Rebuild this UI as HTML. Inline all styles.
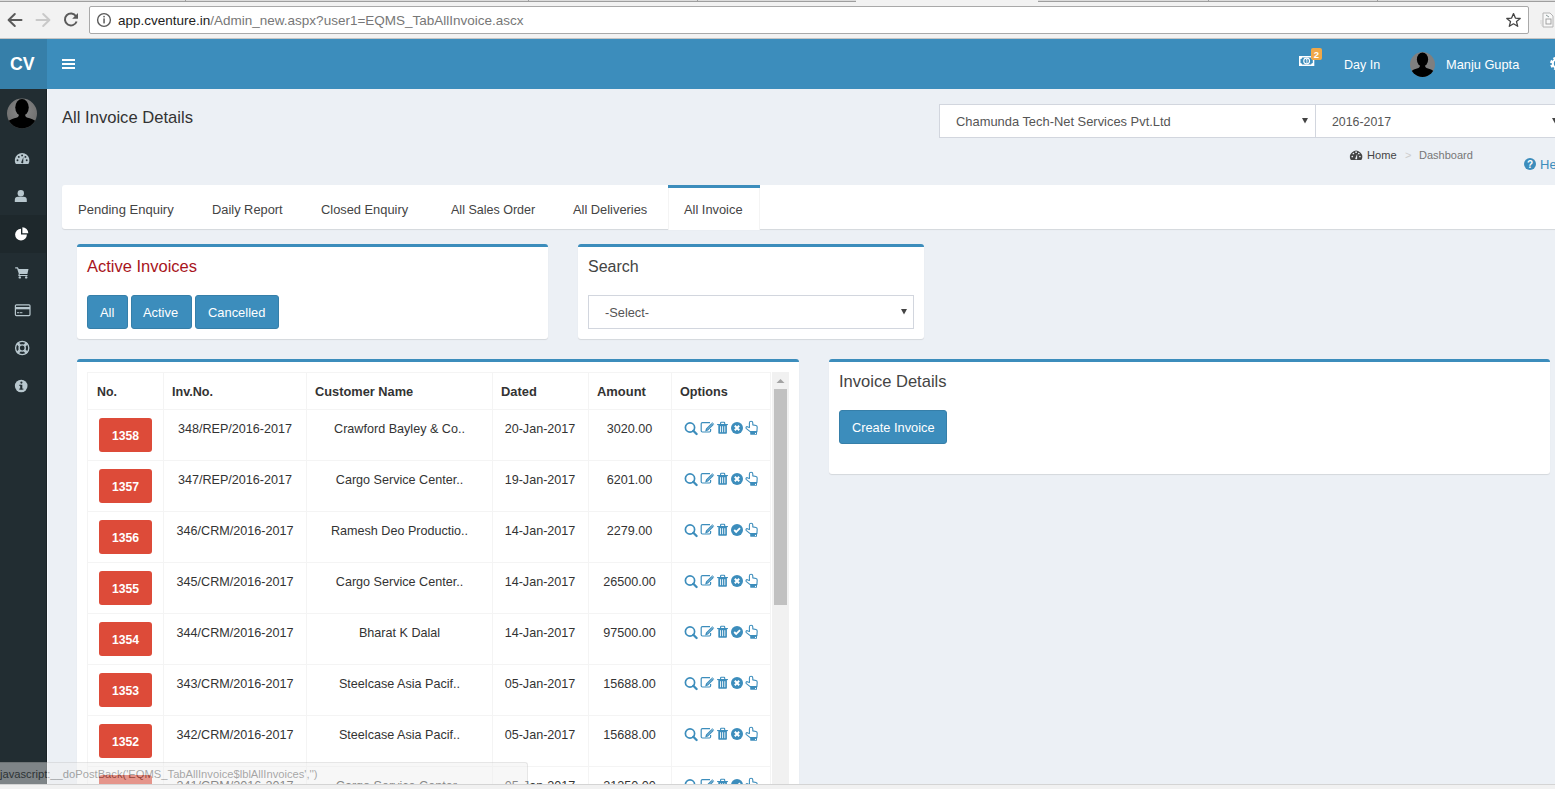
<!DOCTYPE html>
<html><head><meta charset="utf-8">
<style>
*{box-sizing:border-box;margin:0;padding:0}
html,body{width:1555px;height:789px;overflow:hidden;background:#ecf0f5;font-family:"Liberation Sans",sans-serif;color:#333}
.a{position:absolute}
.t{position:absolute;white-space:nowrap;line-height:1}
.tc{position:absolute;white-space:nowrap;line-height:1;text-align:center;font-size:12.6px;color:#333}
.b{font-weight:bold;color:#fff;font-size:12.2px}
svg{position:absolute;overflow:visible}
#chrome{left:0;top:0;width:1555px;height:39px;background:#f2f2f2}
#tabstrip{left:0;top:0;width:1555px;height:2px;background:#dcdcdc;border-bottom:1px solid #9e9e9e}
#omni{left:89px;top:6px;width:1440px;height:28px;background:#fff;border:1px solid #a9a9a9;border-radius:2px}
#chline{left:0;top:38px;width:1555px;height:1px;background:#c4c4c4}
#logo{left:0;top:39px;width:47px;height:50px;background:#367fa9}
#nav{left:47px;top:39px;width:1508px;height:50px;background:#3c8dbc}
#side{left:0;top:89px;width:47px;height:700px;background:#222d32}
#sideact{left:0;top:215px;width:47px;height:38px;background:#1e282c}
.box{position:absolute;background:#fff;border-top:3px solid #3c8dbc;border-radius:3px;box-shadow:0 1px 1px rgba(0,0,0,0.1)}
.btn{position:absolute;background:#3c8dbc;border:1px solid #367fa9;border-radius:3px}
.sel{position:absolute;background:#fff;border:1px solid #d2d6de}
.badge{position:absolute;left:99px;width:53px;height:34px;background:#dd4b39;border-radius:3px}
.hl{position:absolute;left:87px;width:684px;height:1px;background:#f4f4f4}
.vl{position:absolute;top:372px;width:1px;height:420px;background:#f4f4f4}
</style></head><body>
<svg width="0" height="0" style="position:absolute">
<defs>
 <g id="ops" fill="#3c8dbc" stroke="none">
  <!-- search -->
  <circle cx="6" cy="5.5" r="4.6" fill="none" stroke="#3c8dbc" stroke-width="1.7"/>
  <line x1="9.3" y1="8.7" x2="12.6" y2="12" stroke="#3c8dbc" stroke-width="2.3" stroke-linecap="round"/>
  <!-- edit -->
  <path d="M26 0.6 H18.4 Q17.2 0.6 17.2 1.8 V8.8 Q17.2 10 18.4 10 H25.4 Q26.6 10 26.6 8.8 V7" fill="none" stroke="#3c8dbc" stroke-width="1.2"/>
  <path d="M22 6.5 L28.3 0.2 L30.3 2.2 L24 8.5 Z M22 6.5 L24 8.5 L21.1 9.4 Z"/>
  <path d="M23.2 7.3 L28 2.5" stroke="#fff" stroke-width="0.55" opacity="0.8"/>
  <path d="M27.6 0.9 L29.6 2.9" stroke="#fff" stroke-width="0.6"/>
  <!-- trash -->
  <rect x="33.1" y="2" width="10.8" height="1.1"/>
  <path d="M36.6 2.2 V1 Q36.6 0.3 37.3 0.3 H40 Q40.7 0.3 40.7 1 V2.2" fill="none" stroke="#3c8dbc" stroke-width="1.1"/>
  <path d="M34.3 3 H42.9 V11 Q42.9 11.7 42.2 11.7 H35 Q34.3 11.7 34.3 11 Z"/>
  <rect x="36" y="4.2" width="0.85" height="6" fill="#fff"/>
  <rect x="38.2" y="4.2" width="0.85" height="6" fill="#fff"/>
  <rect x="40.4" y="4.2" width="0.85" height="6" fill="#fff"/>
  <!-- hand -->
  <path d="M66.2 9.6 L62.4 6.6 Q61.5 5.8 62.2 5 Q62.9 4.3 63.8 4.9 L65.4 5.6 V0.9 Q65.4 -0.8 67.1 -0.8 Q68.8 -0.8 68.8 0.9 V2.9 L72 3.5 Q73.3 3.8 73.2 5.2 L72.9 9.6 Z" fill="#fff" stroke="#3c8dbc" stroke-width="1.1" stroke-linejoin="round"/>
  <rect x="66.2" y="9.6" width="6.8" height="3.1" rx="0.4"/>
  <circle cx="71.5" cy="11.4" r="0.55" fill="#fff"/>
 </g>
 <g id="ic-x">
  <circle cx="53" cy="6" r="6" fill="#3c8dbc"/>
  <path d="M50.8 3.8 L55.2 8.2 M55.2 3.8 L50.8 8.2" stroke="#fff" stroke-width="2"/>
 </g>
 <g id="ic-c">
  <circle cx="53" cy="6" r="6" fill="#3c8dbc"/>
  <path d="M50.2 6 L52.2 8 L56 4.2" fill="none" stroke="#fff" stroke-width="1.8"/>
 </g>
</defs>
</svg>

<!-- Browser chrome -->
<div id="chrome" class="a"></div>
<div id="tabstrip" class="a"></div>
<div class="a" style="left:856px;top:0;width:182px;height:3px;background:#f2f2f2"></div>
<div class="a" style="left:185px;top:0;width:1px;height:2px;background:#9e9e9e"></div>
<div class="a" style="left:528px;top:0;width:1px;height:2px;background:#9e9e9e"></div>
<div class="a" style="left:697px;top:0;width:1px;height:2px;background:#9e9e9e"></div>
<div class="a" style="left:1208px;top:0;width:1px;height:2px;background:#9e9e9e"></div>
<div class="a" style="left:1377px;top:0;width:1px;height:2px;background:#9e9e9e"></div>
<div id="omni" class="a"></div>
<div id="chline" class="a"></div>
<svg style="left:0;top:0" width="130" height="38">
 <path d="M21.5 20 H9 M14.8 14 L8.6 20 L14.8 26" fill="none" stroke="#5a5a5a" stroke-width="2" stroke-linecap="round" stroke-linejoin="round"/>
 <path d="M36.5 20 H49 M43.2 14 L49.4 20 L43.2 26" fill="none" stroke="#c9c9c9" stroke-width="2" stroke-linecap="round" stroke-linejoin="round"/>
 <path d="M76.6 21.5 A6 6 0 1 1 76 16.2" fill="none" stroke="#5a5a5a" stroke-width="2"/>
 <path d="M78 13 V18.8 H72.2 Z" fill="#5a5a5a"/>
 <circle cx="104" cy="20" r="6.4" fill="none" stroke="#5a5a5a" stroke-width="1.4"/>
 <rect x="103.3" y="18.4" width="1.5" height="5" fill="#5a5a5a"/>
 <rect x="103.3" y="15.9" width="1.5" height="1.5" fill="#5a5a5a"/>
</svg>
<svg style="left:1500px;top:0" width="55" height="38">
 <path d="M13.5 13.6 L15.4 18.1 L20.2 18.5 L16.5 21.6 L17.7 26.3 L13.5 23.8 L9.3 26.3 L10.5 21.6 L6.8 18.5 L11.6 18.1 Z" fill="none" stroke="#444" stroke-width="1.3" stroke-linejoin="round"/>
 <path d="M43 13 H50 L53 16 V27 H43 Z" fill="#f8f8f8" stroke="#b4b4b4" stroke-width="1"/>
 <rect x="46" y="19" width="5" height="5" fill="none" stroke="#9a9a9a" stroke-width="0.9"/>
 <path d="M46 15 L49 17" stroke="#8a9a9a" stroke-width="1"/>
 <path d="M40 21 H43 M40 23 H43 M41 25 H43" stroke="#c8c8c8" stroke-width="0.7"/>
</svg>
<div class="t" style="left:118px;top:14px;font-size:13.5px;color:#222">app.cventure.in<span style="color:#777">/Admin_new.aspx?user1=EQMS_TabAllInvoice.ascx</span></div>

<!-- Header -->
<div id="logo" class="a"></div>
<div id="nav" class="a"></div>
<div class="t" style="left:10px;top:56px;font-size:17.7px;font-weight:bold;color:#fff">CV</div>
<div class="a" style="left:62px;top:59px;width:13px;height:2px;background:#fff"></div>
<div class="a" style="left:62px;top:63px;width:13px;height:2px;background:#fff"></div>
<div class="a" style="left:62px;top:67px;width:13px;height:2px;background:#fff"></div>
<svg style="left:1290px;top:40px" width="40" height="40">
 <rect x="9" y="16" width="15.3" height="10" fill="#fff"/>
 <path d="M12.2 17.4 H21.1 Q21.1 18.9 22.8 18.9 V23.1 Q21.1 23.1 21.1 24.6 H12.2 Q12.2 23.1 10.5 23.1 V18.9 Q12.2 18.9 12.2 17.4 Z" fill="#3c8dbc"/>
 <circle cx="16.65" cy="21" r="2.9" fill="none" stroke="#fff" stroke-width="1.1"/>
 <path d="M15.9 19.9 L16.9 19.2 V22.9" fill="none" stroke="#fff" stroke-width="0.9"/>
 <rect x="21" y="8" width="11" height="12" rx="2" fill="#f0a848"/>
 <text x="26.5" y="17.6" font-family="Liberation Sans" font-size="9.5" font-weight="bold" fill="#fff" text-anchor="middle">2</text>
</svg>
<div class="t" style="left:1344px;top:59px;font-size:12.5px;color:#fff">Day In</div>
<svg style="left:1410px;top:52px" width="26" height="26">
 <defs><clipPath id="av2"><circle cx="12.5" cy="12.5" r="12.5"/></clipPath></defs>
 <circle cx="12.5" cy="12.5" r="12.5" fill="#7f7f7f"/>
 <g clip-path="url(#av2)"><g fill="#000" transform="translate(12.5,12.5) scale(12.5)">
  <ellipse cx="0" cy="-0.4" rx="0.45" ry="0.56"/>
  <path d="M-1.1 1.1 V0.7 Q-0.8 0.34 -0.32 0.27 Q-0.2 0.2 -0.2 0.05 H0.2 Q0.2 0.2 0.32 0.27 Q0.8 0.34 1.1 0.7 V1.1 Z"/>
 </g></g>
</svg>
<div class="t" style="left:1446px;top:59px;font-size:12.8px;color:#fff">Manju Gupta</div>
<svg style="left:1542px;top:50px" width="20" height="30">
 <circle cx="15" cy="13.5" r="5.2" fill="none" stroke="#fff" stroke-width="3.4" stroke-dasharray="2.4 1.7"/>
 <circle cx="15" cy="13.5" r="4.2" fill="none" stroke="#fff" stroke-width="2"/>
</svg>

<!-- Sidebar -->
<div id="side" class="a"></div>
<div id="sideact" class="a"></div>
<div class="a" style="left:46px;top:89px;width:1px;height:700px;background:#1a2327"></div>
<div class="a" style="left:47px;top:89px;width:1px;height:700px;background:#f6f9fd"></div>
<svg style="left:0;top:89px" width="47" height="320">
 <defs><clipPath id="av1"><circle cx="22" cy="24.5" r="15"/></clipPath>
  <radialGradient id="avg" cx="0.5" cy="0.4" r="0.6"><stop offset="0" stop-color="#8a8a8a"/><stop offset="1" stop-color="#6e6e6e"/></radialGradient></defs>
 <circle cx="22" cy="24.5" r="15" fill="url(#avg)"/>
 <g clip-path="url(#av1)"><g fill="#000" transform="translate(22,24.5) scale(15)">
  <ellipse cx="0" cy="-0.4" rx="0.45" ry="0.56"/>
  <path d="M-1.1 1.1 V0.7 Q-0.8 0.34 -0.32 0.27 Q-0.2 0.2 -0.2 0.05 H0.2 Q0.2 0.2 0.32 0.27 Q0.8 0.34 1.1 0.7 V1.1 Z"/>
 </g></g>
 <!-- dashboard -->
 <g transform="translate(14.8,64)">
  <path d="M1.05 11 A7.3 7.3 0 1 1 13.55 11 Z" fill="#b8c7ce"/>
  <circle cx="2.7" cy="7.2" r="0.95" fill="#222d32"/><circle cx="4" cy="3.9" r="0.95" fill="#222d32"/><circle cx="7.3" cy="2.4" r="0.95" fill="#222d32"/><circle cx="10.6" cy="3.9" r="0.95" fill="#222d32"/><circle cx="11.9" cy="7.2" r="0.95" fill="#222d32"/>
  <path d="M6.3 9.6 L8.6 4 L8.4 9.9 Q7.4 10.8 6.3 9.6 Z" fill="#222d32"/>
 </g>
 <!-- user -->
 <g transform="translate(14.8,101)" fill="#b8c7ce">
  <circle cx="6" cy="3.2" r="3.2"/>
  <path d="M0 12 V10 Q0 6.8 3.2 6.8 H8.8 Q12 6.8 12 10 V12 Z"/>
 </g>
 <!-- pie -->
 <g transform="translate(14.8,137.7)">
  <path d="M6.2 2 A5.9 5.9 0 1 0 12.1 7.9 H6.2 Z" fill="#fff"/>
  <path d="M7.6 0.6 A5.9 5.9 0 0 1 13.5 6.5 H7.6 Z" fill="#fff"/>
 </g>
 <!-- cart -->
 <g transform="translate(15.2,177.7)" fill="#b8c7ce">
  <path d="M0 0.6 H2.6 L3.6 2.2 H13.3 L12.2 7.4 H4.6 L4.3 8.3 H12.3 V9.4 H3 L3.6 7 L1.9 1.7 H0 Z"/>
  <circle cx="4.6" cy="10.7" r="1.2"/><circle cx="11" cy="10.7" r="1.2"/>
 </g>
 <!-- card -->
 <g transform="translate(14.8,215.2)">
  <rect x="0.6" y="0.6" width="14.6" height="10.8" rx="1" fill="none" stroke="#b8c7ce" stroke-width="1.2"/>
  <rect x="0.6" y="2.8" width="14.6" height="2.3" fill="#b8c7ce"/>
  <rect x="2.2" y="8" width="2.4" height="1" fill="#b8c7ce"/><rect x="5.2" y="8" width="2.4" height="1" fill="#b8c7ce"/>
 </g>
 <!-- life ring -->
 <g transform="translate(22.2,259)" fill="none" stroke="#b8c7ce">
  <circle r="6.6" stroke-width="1.3"/>
  <circle r="3.1" stroke-width="1.4"/>
  <path d="M-2.4 -2.4 L-4.9 -4.9 M2.4 -2.4 L4.9 -4.9 M-2.4 2.4 L-4.9 4.9 M2.4 2.4 L4.9 4.9" stroke-width="2.8"/>
 </g>
 <!-- info -->
 <g transform="translate(21.2,297)">
  <circle r="6.3" fill="#b8c7ce"/>
  <rect x="-1" y="-1.2" width="2.1" height="4.6" fill="#222d32"/>
  <rect x="-2" y="-1.2" width="2" height="1" fill="#222d32"/>
  <rect x="-2" y="2.6" width="4.2" height="1" fill="#222d32"/>
  <circle cx="0.2" cy="-3.4" r="1.1" fill="#222d32"/>
 </g>
</svg>

<!-- Content header -->
<div class="t" style="left:62px;top:110px;font-size:16.6px;color:#333">All Invoice Details</div>
<div class="sel" style="left:939px;top:104px;width:377px;height:34px"></div>
<div class="sel" style="left:1315px;top:104px;width:260px;height:34px"></div>
<div class="t" style="left:956px;top:116px;font-size:12.9px;color:#555">Chamunda Tech-Net Services Pvt.Ltd</div>
<div class="t" style="left:1332px;top:116px;font-size:12.35px;color:#555">2016-2017</div>
<svg style="left:0;top:0" width="1555" height="789">
 <path d="M1302 118 H1308 L1305 123.5 Z" fill="#444"/>
 <path d="M1552 118 H1558 L1555 123.5 Z" fill="#444"/>
 <!-- breadcrumb dashboard icon -->
 <g transform="translate(1350,150)">
  <path d="M0.85 9.9 A6.1 6.1 0 1 1 11.35 9.9 Z" fill="#444"/>
  <circle cx="2.3" cy="6.5" r="0.85" fill="#ecf0f5"/><circle cx="3.4" cy="3.5" r="0.85" fill="#ecf0f5"/><circle cx="6.1" cy="2.2" r="0.85" fill="#ecf0f5"/><circle cx="8.8" cy="3.5" r="0.85" fill="#ecf0f5"/><circle cx="9.9" cy="6.5" r="0.85" fill="#ecf0f5"/>
  <path d="M5.2 8.8 L7.2 3.8 L7.1 9 Q6.2 9.8 5.2 8.8 Z" fill="#ecf0f5"/>
 </g>
 <!-- help -->
 <circle cx="1530" cy="164" r="6" fill="#3c8dbc"/>
 <text x="1530" y="167.6" font-family="Liberation Sans" font-size="10" font-weight="bold" fill="#fff" text-anchor="middle">?</text>
</svg>
<div class="t" style="left:1367px;top:150px;font-size:11.1px;color:#444">Home</div>
<div class="t" style="left:1405px;top:150px;font-size:11px;color:#ccc">&gt;</div>
<div class="t" style="left:1419px;top:150px;font-size:11px;color:#777">Dashboard</div>
<div class="t" style="left:1540px;top:158px;font-size:13px;color:#3c8dbc">Help</div>

<!-- Tabs -->
<div class="a" style="left:62px;top:185px;width:1500px;height:44px;background:#fff;border-radius:3px;box-shadow:0 1px 1px rgba(0,0,0,0.1)"></div>
<div class="a" style="left:668px;top:188px;width:92px;height:42px;background:#fff;border-left:1px solid #f4f4f4;border-right:1px solid #f4f4f4"></div>
<div class="a" style="left:668px;top:185px;width:92px;height:3px;background:#3c8dbc"></div>
<div class="t" style="left:78px;top:203px;font-size:13.05px;color:#444">Pending Enquiry</div>
<div class="t" style="left:212px;top:204px;font-size:12.85px;color:#444">Daily Report</div>
<div class="t" style="left:321px;top:204px;font-size:12.85px;color:#444">Closed Enquiry</div>
<div class="t" style="left:451px;top:204px;font-size:12.52px;color:#444">All Sales Order</div>
<div class="t" style="left:573px;top:204px;font-size:12.85px;color:#444">All Deliveries</div>
<div class="t" style="left:684px;top:204px;font-size:12.85px;color:#444">All Invoice</div>

<!-- Active invoices box -->
<div class="box" style="left:77px;top:244px;width:471px;height:95px"></div>
<div class="t" style="left:87px;top:258px;font-size:16.5px;color:#a8141c">Active Invoices</div>
<div class="btn" style="left:87px;top:295px;width:41px;height:34px"></div>
<div class="btn" style="left:131px;top:295px;width:61px;height:34px"></div>
<div class="btn" style="left:195px;top:295px;width:84px;height:34px"></div>
<div class="t" style="left:100px;top:307px;font-size:12.9px;color:#fff">All</div>
<div class="t" style="left:143px;top:307px;font-size:12.9px;color:#fff">Active</div>
<div class="t" style="left:208px;top:307px;font-size:12.9px;color:#fff">Cancelled</div>

<!-- Search box -->
<div class="box" style="left:578px;top:244px;width:346px;height:95px"></div>
<div class="t" style="left:588px;top:259px;font-size:16px;color:#444">Search</div>
<div class="sel" style="left:588px;top:295px;width:326px;height:34px"></div>
<div class="t" style="left:605px;top:307px;font-size:12.8px;color:#555">-Select-</div>
<svg style="left:0;top:0" width="1" height="1"><path d="M901 309 H907 L904 314.5 Z" fill="#444"/></svg>

<!-- Table box -->
<div class="box" style="left:77px;top:359px;width:722px;height:460px"></div>
<div class="hl" style="top:372px"></div>
<div class="vl" style="left:87px"></div>
<div class="vl" style="left:163px"></div>
<div class="vl" style="left:306px"></div>
<div class="vl" style="left:492px"></div>
<div class="vl" style="left:588px"></div>
<div class="vl" style="left:671px"></div>
<div class="vl" style="left:770px"></div>
<div class="t" style="left:97px;top:386px;font-size:12.4px;font-weight:bold;color:#333">No.</div>
<div class="t" style="left:172px;top:386px;font-size:12.6px;font-weight:bold;color:#333">Inv.No.</div>
<div class="t" style="left:315px;top:386px;font-size:12.8px;font-weight:bold;color:#333">Customer Name</div>
<div class="t" style="left:501px;top:386px;font-size:12.9px;font-weight:bold;color:#333">Dated</div>
<div class="t" style="left:597px;top:386px;font-size:12.95px;font-weight:bold;color:#333">Amount</div>
<div class="t" style="left:680px;top:386px;font-size:12.65px;font-weight:bold;color:#333">Options</div>
<div class="hl" style="top:409px"></div>
<div class="badge" style="top:418px"></div>
<div class="tc b" style="left:99px;width:53px;top:430px">1358</div>
<div class="tc" style="left:163px;width:144px;top:423px">348/REP/2016-2017</div>
<div class="tc" style="left:307px;width:185px;top:423px">Crawford Bayley &amp; Co..</div>
<div class="tc" style="left:492px;width:96px;top:423px">20-Jan-2017</div>
<div class="tc" style="left:588px;width:83px;top:423px">3020.00</div>
<svg style="left:684px;top:422px" width="75" height="15"><use href="#ops"/><use href="#ic-x"/></svg>
<div class="hl" style="top:460px"></div>
<div class="badge" style="top:469px"></div>
<div class="tc b" style="left:99px;width:53px;top:481px">1357</div>
<div class="tc" style="left:163px;width:144px;top:474px">347/REP/2016-2017</div>
<div class="tc" style="left:307px;width:185px;top:474px">Cargo Service Center..</div>
<div class="tc" style="left:492px;width:96px;top:474px">19-Jan-2017</div>
<div class="tc" style="left:588px;width:83px;top:474px">6201.00</div>
<svg style="left:684px;top:473px" width="75" height="15"><use href="#ops"/><use href="#ic-x"/></svg>
<div class="hl" style="top:511px"></div>
<div class="badge" style="top:520px"></div>
<div class="tc b" style="left:99px;width:53px;top:532px">1356</div>
<div class="tc" style="left:163px;width:144px;top:525px">346/CRM/2016-2017</div>
<div class="tc" style="left:307px;width:185px;top:525px">Ramesh Deo Productio..</div>
<div class="tc" style="left:492px;width:96px;top:525px">14-Jan-2017</div>
<div class="tc" style="left:588px;width:83px;top:525px">2279.00</div>
<svg style="left:684px;top:524px" width="75" height="15"><use href="#ops"/><use href="#ic-c"/></svg>
<div class="hl" style="top:562px"></div>
<div class="badge" style="top:571px"></div>
<div class="tc b" style="left:99px;width:53px;top:583px">1355</div>
<div class="tc" style="left:163px;width:144px;top:576px">345/CRM/2016-2017</div>
<div class="tc" style="left:307px;width:185px;top:576px">Cargo Service Center..</div>
<div class="tc" style="left:492px;width:96px;top:576px">14-Jan-2017</div>
<div class="tc" style="left:588px;width:83px;top:576px">26500.00</div>
<svg style="left:684px;top:575px" width="75" height="15"><use href="#ops"/><use href="#ic-x"/></svg>
<div class="hl" style="top:613px"></div>
<div class="badge" style="top:622px"></div>
<div class="tc b" style="left:99px;width:53px;top:634px">1354</div>
<div class="tc" style="left:163px;width:144px;top:627px">344/CRM/2016-2017</div>
<div class="tc" style="left:307px;width:185px;top:627px">Bharat K Dalal</div>
<div class="tc" style="left:492px;width:96px;top:627px">14-Jan-2017</div>
<div class="tc" style="left:588px;width:83px;top:627px">97500.00</div>
<svg style="left:684px;top:626px" width="75" height="15"><use href="#ops"/><use href="#ic-c"/></svg>
<div class="hl" style="top:664px"></div>
<div class="badge" style="top:673px"></div>
<div class="tc b" style="left:99px;width:53px;top:685px">1353</div>
<div class="tc" style="left:163px;width:144px;top:678px">343/CRM/2016-2017</div>
<div class="tc" style="left:307px;width:185px;top:678px">Steelcase Asia Pacif..</div>
<div class="tc" style="left:492px;width:96px;top:678px">05-Jan-2017</div>
<div class="tc" style="left:588px;width:83px;top:678px">15688.00</div>
<svg style="left:684px;top:677px" width="75" height="15"><use href="#ops"/><use href="#ic-x"/></svg>
<div class="hl" style="top:715px"></div>
<div class="badge" style="top:724px"></div>
<div class="tc b" style="left:99px;width:53px;top:736px">1352</div>
<div class="tc" style="left:163px;width:144px;top:729px">342/CRM/2016-2017</div>
<div class="tc" style="left:307px;width:185px;top:729px">Steelcase Asia Pacif..</div>
<div class="tc" style="left:492px;width:96px;top:729px">05-Jan-2017</div>
<div class="tc" style="left:588px;width:83px;top:729px">15688.00</div>
<svg style="left:684px;top:728px" width="75" height="15"><use href="#ops"/><use href="#ic-x"/></svg>
<div class="hl" style="top:766px"></div>
<div class="badge" style="top:775px"></div>
<div class="tc b" style="left:99px;width:53px;top:787px">1351</div>
<div class="tc" style="left:163px;width:144px;top:780px">341/CRM/2016-2017</div>
<div class="tc" style="left:307px;width:185px;top:780px">Cargo Service Center..</div>
<div class="tc" style="left:492px;width:96px;top:780px">05-Jan-2017</div>
<div class="tc" style="left:588px;width:83px;top:780px">21250.00</div>
<svg style="left:684px;top:779px" width="75" height="15"><use href="#ops"/><use href="#ic-c"/></svg>
<!-- scrollbar -->
<div class="a" style="left:772px;top:372px;width:17px;height:412px;background:#f1f1f1"></div>
<div class="a" style="left:774px;top:389px;width:13px;height:216px;background:#c1c1c1"></div>
<svg style="left:772px;top:372px" width="17" height="17"><path d="M4.5 11 L8.5 7 L12.5 11 Z" fill="#a3a3a3"/></svg>

<!-- Invoice details box -->
<div class="box" style="left:829px;top:359px;width:721px;height:115px"></div>
<div class="t" style="left:839px;top:374px;font-size:16.55px;color:#444">Invoice Details</div>
<div class="btn" style="left:839px;top:410px;width:108px;height:34px"></div>
<div class="t" style="left:852px;top:422px;font-size:12.8px;color:#fff">Create Invoice</div>

<!-- status bubble -->
<div class="a" style="left:0;top:762px;width:528px;height:23px;opacity:0.45">
 <div class="a" style="left:0;top:0;width:528px;height:23px;background:#efefef;border-top:1px solid #c8c8c8;border-right:1px solid #c8c8c8;border-top-right-radius:3px"></div>
 <div class="t" style="left:0;top:7px;font-size:11.2px;color:#3a3a3a">javascript:__doPostBack('EQMS_TabAllInvoice$lblAllInvoices','')</div>
</div>
<!-- bottom frame -->
<div class="a" style="left:0;top:784px;width:1555px;height:1px;background:#d4d4d4"></div>
<div class="a" style="left:0;top:785px;width:1555px;height:4px;background:#f1f1f1"></div>
</body></html>
